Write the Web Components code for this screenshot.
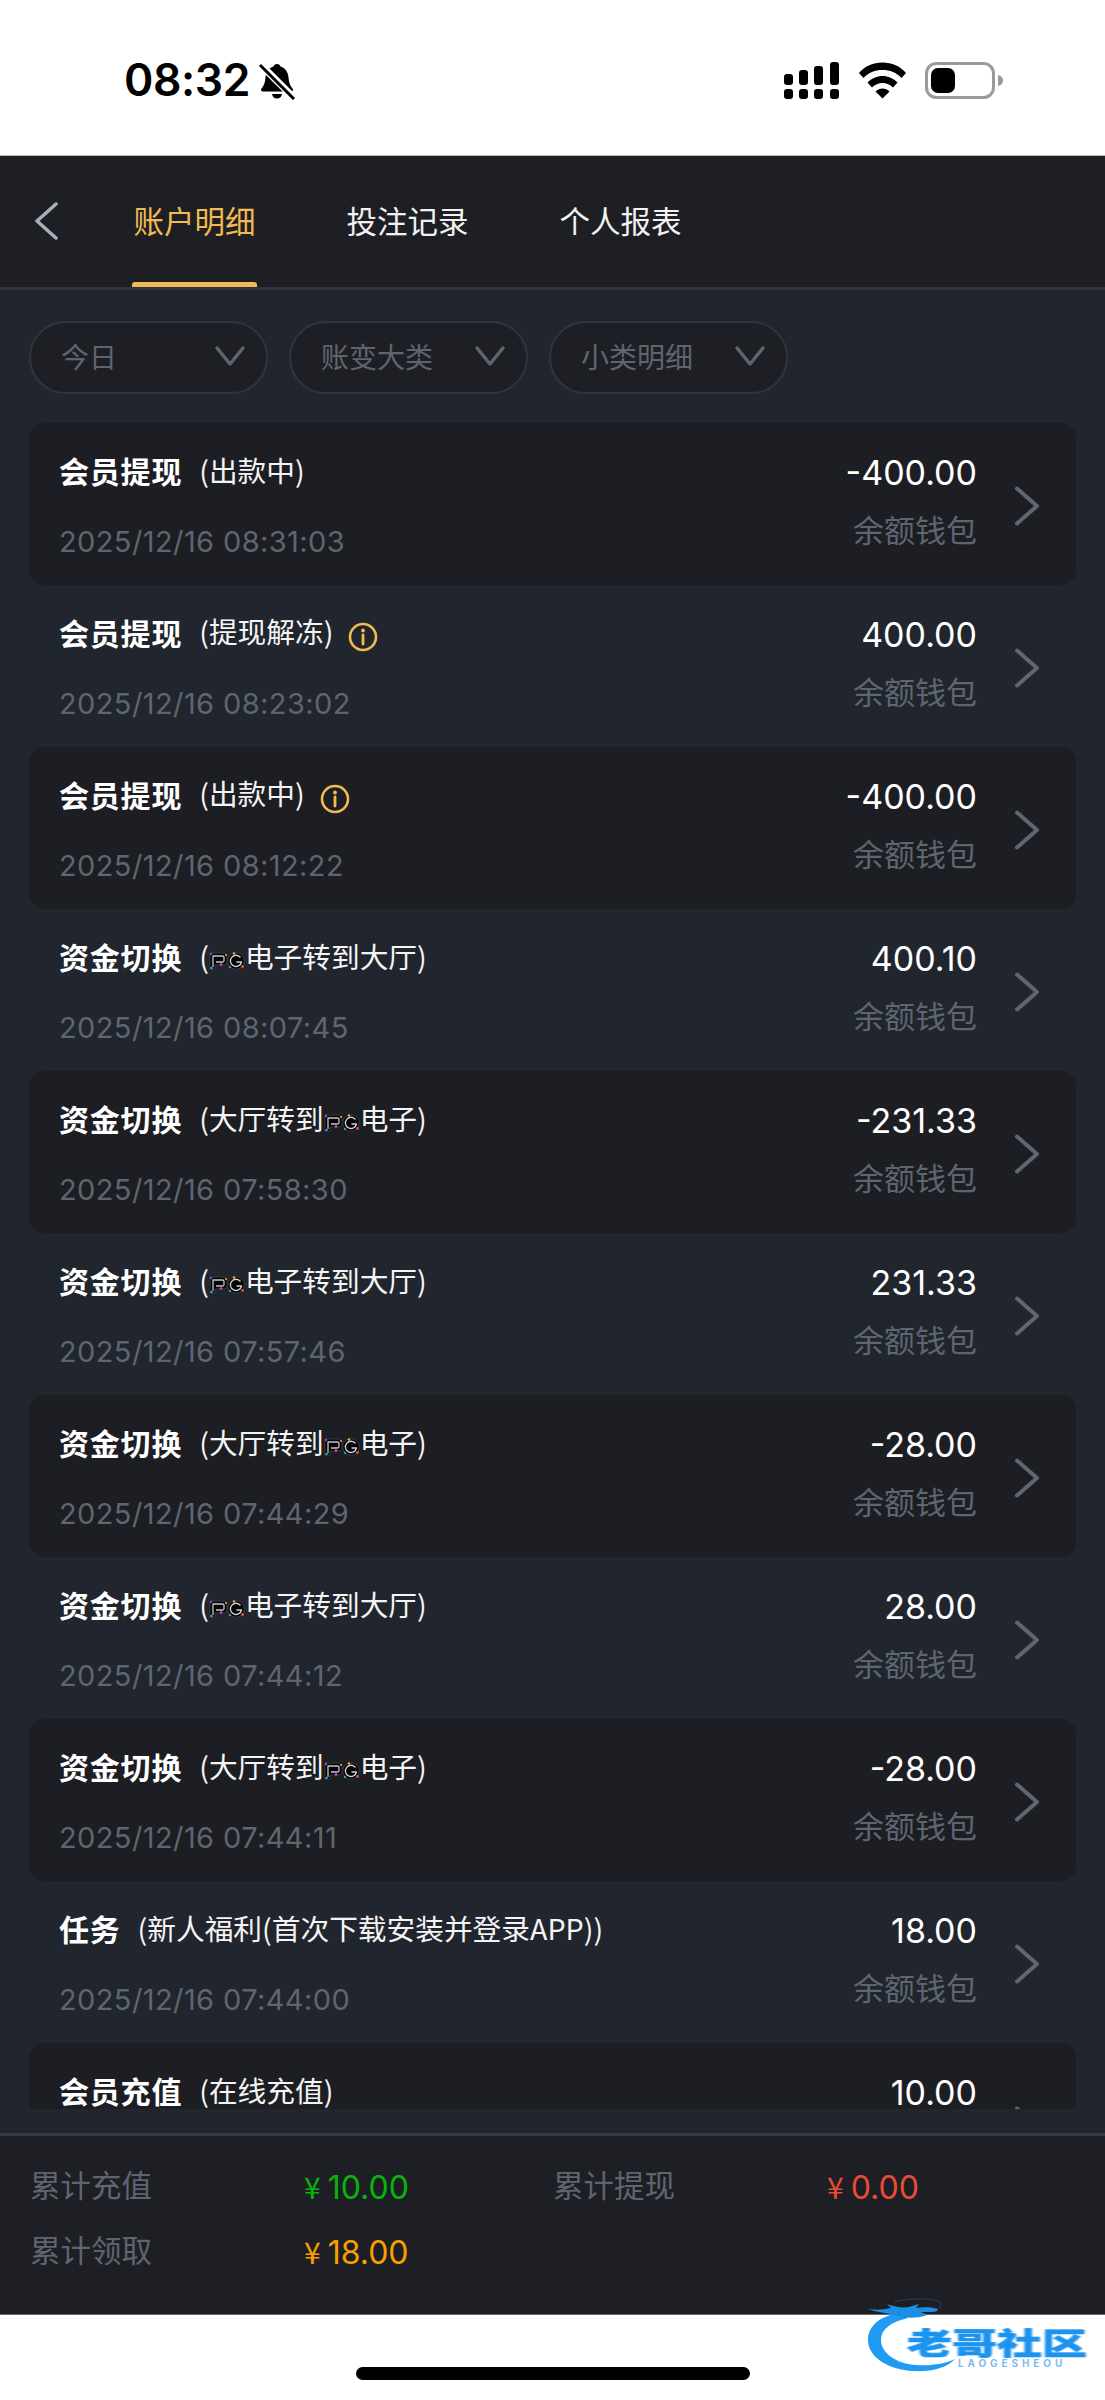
<!DOCTYPE html>
<html lang="zh"><head><meta charset="utf-8"><style>
html,body{margin:0;padding:0;background:#fff}
body{width:1105px;height:2400px;overflow:hidden;position:relative;font-family:Inter,"Noto Sans CJK SC",sans-serif}
</style></head><body>
<app-screen></app-screen>
<script>
const CJK='"Noto Sans CJK SC",Inter,sans-serif';
class StatusBar extends HTMLElement{constructor(){super();this.attachShadow({mode:'open'}).innerHTML=`<style>
:host{display:flex;height:156px;background:#fff;align-items:flex-start;box-sizing:border-box;padding:62px 0 0 124px;border-bottom:1px solid #bbb;color:#000}
.t{font:600 44.500px/36px Inter,sans-serif;letter-spacing:-.4px;width:134px;height:36px}
svg{display:block}
.r{margin-left:488px;display:flex;align-items:flex-start;gap:18px}
</style><span class="t">08:32</span>
<svg width="38" height="38" viewBox="0 0 38 38"><path d="M19 2c2 0 3 1 3.500 2.500 5 1.500 7.500 5.500 8 11 .4 5 1.500 8 4 11 1 1.500.5 3-1.500 3H5c-2 0-2.500-1.500-1.500-3 2.500-3 3.600-6 4-11 .5-5.500 3-9.500 8-11C16 3 17 2 19 2z"/><path d="M14 32h10c-.5 3-2.500 4.500-5 4.500S14.500 35 14 32z"/><path d="M3 3l33 33" stroke="#fff" stroke-width="7"/><path d="M2 3l34 34" stroke="#000" stroke-width="3"/></svg>
<div class="r">
<svg width="56" height="38" viewBox="0 0 56 38"><g><rect x="0" y="12" width="9" height="11" rx="3"/><rect x="15" y="8" width="9" height="15" rx="3"/><rect x="30" y="4" width="9" height="19" rx="3"/><rect x="46" y="0" width="9" height="23" rx="3"/><rect x="0" y="27" width="9" height="10" rx="3"/><rect x="15" y="27" width="9" height="10" rx="3"/><rect x="30" y="27" width="9" height="10" rx="3"/><rect x="46" y="27" width="9" height="10" rx="3"/></g></svg>
<svg width="49" height="37" viewBox="0 0 49 37"><path d="M1 11C7 4 15 .5 24.500.5S42 4 48 11l-4.500 5C38.500 10.500 32 8 24.500 8S10.500 10.500 5.500 16z"/><path d="M9.500 20.500C13.500 16.500 19 14 24.500 14s11 2.500 15 6.500l-4.500 5c-3-3-6.500-4.500-10.500-4.500S17 22.500 14 25.500z"/><path d="M17.500 29.500c2-2 4.500-3 7-3s5 1 7 3l-7 7z"/></svg>
<svg width="79" height="37" viewBox="0 0 79 37"><rect x="1.500" y="1.500" width="67" height="34" rx="10" fill="#fff" stroke="#9a9a9a" stroke-width="3"/><rect x="6" y="6" width="24" height="25" rx="7"/><path d="M73 13c3 .5 5 2.500 5 5.500s-2 5-5 5.500z" fill="#9a9a9a"/></svg>
</div>`}}
class NavTabs extends HTMLElement{constructor(){super();this.attachShadow({mode:'open'}).innerHTML=`<style>
:host{display:flex;height:134px;background:#1e1f24;border-bottom:3px solid #2d323c;box-sizing:border-box;align-items:stretch;font:400 30.500px/1 ${CJK};color:#f2f2f2}
.b{width:132px;flex:none;display:flex;align-items:center;padding:0 0 2px 33px;box-sizing:border-box}
.i{position:relative;display:flex;align-items:center;padding-bottom:2px;width:125px;white-space:nowrap;justify-content:center}
.i+.i{margin-left:88px}
.on{color:#efbb52}
.on::after{content:"";position:absolute;left:0;right:0;bottom:0;height:5px;background:#efbb52;border-radius:3px 3px 0 0}
</style><div class="b"><svg width="26" height="38" viewBox="0 0 26 38"><path d="M23 2L4 19l19 17" fill="none" stroke="#a7b0ba" stroke-width="3.500" stroke-linecap="round" stroke-linejoin="round"/></svg></div>
<div class="i on">账户明细</div><div class="i">投注记录</div><div class="i">个人报表</div>`}}
class FilterPill extends HTMLElement{constructor(){super();this.attachShadow({mode:'open'}).innerHTML=`<style>
:host{display:flex;align-items:center;justify-content:space-between;box-sizing:border-box;width:239px;height:73px;padding:0 21px 3px 30px;border:2px solid #2f3540;border-radius:37px;background:#1e1f24;color:#5e6570;font:400 28px/1 ${CJK}}
</style><slot></slot><svg width="30" height="21" viewBox="0 0 30 21"><path d="M2 2l13 16L28 2" fill="none" stroke="#5e6570" stroke-width="3.500" stroke-linecap="round" stroke-linejoin="round"/></svg>`}}
class FilterBar extends HTMLElement{constructor(){super();this.attachShadow({mode:'open'}).innerHTML=`<style>
:host{display:flex;gap:21px;padding:31px 29px 29px}</style><slot></slot>`}}
class PgLogo extends HTMLElement{constructor(){super();this.attachShadow({mode:'open'}).innerHTML=`<style>
:host{display:inline-block;width:36px;height:18px;vertical-align:-2px}svg{display:block}
</style><svg width="36" height="18" viewBox="0 0 36 18" fill="none" stroke-linejoin="round">
<path d="M1 17V1h13c2.500 0 4 1.500 4 4v4c0 2.500-1.500 4-4 4H6v4z" fill="#050505" stroke="#3a3b40" stroke-width="1"/>
<path d="M4 15V4h9.500c1 0 1.500.5 1.500 1.500v3c0 1-.5 1.500-1.500 1.500H7" stroke="#c4c5ca" stroke-width="1.300"/>
<circle cx="27" cy="9" r="8.300" fill="#050505" stroke="#3a3b40" stroke-width="1"/>
<path d="M31.500 5.500a5.600 5.600 0 1 0 1 4.500H27.500" stroke="#d0d1d5" stroke-width="1.300"/>
<circle cx="2" cy="2" r="1.300" fill="#7b3fe8"/><circle cx="2.500" cy="16" r="1.200" fill="#29b6e8"/><circle cx="12" cy="12.500" r="1.300" fill="#e040e0"/><circle cx="17" cy="3" r="1.100" fill="#f2a030"/>
<circle cx="25" cy="1.500" r="1.300" fill="#f2a030"/><circle cx="33.500" cy="14.500" r="1.400" fill="#f05030"/><circle cx="21" cy="15" r="1.100" fill="#29b6e8"/></svg>`}}
class InfoIcon extends HTMLElement{constructor(){super();this.attachShadow({mode:'open'}).innerHTML=`<style>
:host{display:inline-block;width:30px;height:30px;margin-left:15px;vertical-align:-9px}svg{display:block}
</style><svg width="30" height="30" viewBox="0 0 30 30"><circle cx="15" cy="15" r="13" fill="none" stroke="#efbb52" stroke-width="2.600"/><circle cx="15" cy="8.500" r="1.900" fill="#efbb52"/><path d="M15 13v9" stroke="#efbb52" stroke-width="2.800" stroke-linecap="round"/></svg>`}}
class LedgerRow extends HTMLElement{constructor(){super();const s=this.attachShadow({mode:'open'});
const d=this.getAttribute('d');
s.innerHTML=`<style>
:host{display:flex;height:162px;box-sizing:border-box;padding:29px 35px 0 30px;border-radius:15px;color:#fff;flex:none}
:host([dark]){background:#1d1e23}
.l{flex:1;min-width:0}
.tt{display:flex;align-items:center;height:36px;white-space:nowrap}
b{font:700 30px/36px ${CJK};letter-spacing:.8px}
.s{font:400 28.700px/36px ${CJK};margin-left:17px;color:#f4f4f4;white-space:nowrap}
.d{font:400 29px/40px Inter,sans-serif;color:#5e6570;margin-top:34px;white-space:nowrap;letter-spacing:.4px}
.r{width:200px;text-align:right;margin-right:36px}
.a{font:400 34px/32px Inter,sans-serif;margin-top:5px;color:#fff}
.w{font:400 31px/40px ${CJK};color:#5e6570;margin-top:20px}
svg{display:block;margin-top:33px;flex:none}
</style><div class="l"><div class="tt"><b></b><span class="s"><slot></slot></span></div>${d?'<div class="d"></div>':''}</div>
<div class="r"><div class="a"></div>${d?'<div class="w">余额钱包</div>':''}</div>
<svg width="28" height="42" viewBox="0 0 28 42"><path d="M4 3.500l20 17.500L4 38.500" fill="none" stroke="#5f6671" stroke-width="4" stroke-linecap="round" stroke-linejoin="round"/></svg>`;
s.querySelector('b').textContent=this.getAttribute('t');
if(d)s.querySelector('.d').textContent=d;
s.querySelector('.a').textContent=this.getAttribute('a');}}
class LedgerList extends HTMLElement{constructor(){super();this.attachShadow({mode:'open'}).innerHTML=`<style>
:host{display:flex;flex-direction:column;height:1686px;margin:0 29px 24px 29px;overflow:hidden}</style><slot></slot>`}}
class TotalCell extends HTMLElement{constructor(){super();const c=this.getAttribute('c');const s=this.attachShadow({mode:'open'});s.innerHTML=`<style>
:host{display:flex;align-items:center;height:65px;width:523px;flex:none}
.k{width:274px;flex:none;font:400 30.500px/1 ${CJK};color:#5e6570;padding-bottom:6px}
.v{font:400 32px/1 Inter,sans-serif;color:${c};white-space:nowrap}
.y{font:400 30px/1 ${CJK};margin-right:7px}
</style><span class="k"></span><span class="v"><span class="y">¥</span><span class="n"></span></span>`;
s.querySelector('.k').textContent=this.getAttribute('k');s.querySelector('.n').textContent=this.getAttribute('v');}}
class TotalsBar extends HTMLElement{constructor(){super();this.attachShadow({mode:'open'}).innerHTML=`<style>
:host{display:flex;flex-wrap:wrap;align-content:flex-start;height:182px;box-sizing:border-box;background:#1e1f24;border-top:3px solid #333843;border-bottom:1px solid #666a70;padding:19px 0 0 30px}
</style><slot></slot>`}}
class HomeBar extends HTMLElement{constructor(){super();this.attachShadow({mode:'open'}).innerHTML=`<style>
:host{display:flex;justify-content:center;background:#fff;height:85px;padding-top:52px;box-sizing:border-box}
i{display:block;width:394px;height:13px;background:#000;border-radius:7px}</style><i></i>`}}
class WatermarkLogo extends HTMLElement{constructor(){super();this.attachShadow({mode:'open'}).innerHTML=`<style>
:host{position:absolute;left:860px;top:2296px;width:240px;height:80px;display:block}
svg{position:absolute;left:0;top:0;filter:blur(.5px)}
.c{position:absolute;left:47px;top:30px;font:900 30px/30px ${CJK};white-space:nowrap;transform-origin:0 0;transform:scaleX(1.500);color:#1c93ee;filter:blur(.6px);-webkit-text-stroke:.6px #1c93ee}
.e{position:absolute;left:98px;top:62px;font:700 10px/10px Inter,sans-serif;letter-spacing:3.900px;color:#7cbdf0;white-space:nowrap}
</style><svg width="240" height="82" viewBox="0 0 240 82" fill="none">
<path d="M44 17C22 18 8 29 8 44c0 18 22 30 45 31 18 1 34-3 42-12-10 5-24 7-38 6C36 68 21 57 21 44c0-11 10-18 27-22z" fill="#1f9bf3"/>
<path d="M7 13c9 1 15 1 24-1l-4-4c8 3 15 4 22 3l10-3-3 4c7-1 16-1 22 1 0 3-5 3-9 3l-8 0 6 3c-10 4-22 3-30 1-10-3-20-4-30-7z" fill="#1b8fe4"/>
<path d="M34 6c10-3 36-5 46 0 2 2 1 4-1 6" stroke="#22384c" stroke-width="1.300"/></svg>
<span class="c">老哥社区</span><span class="e">LAOGESHEOU</span>`}}
class AppScreen extends HTMLElement{constructor(){super();
const rows=[
['会员提现','(出款中)','2025/12/16 08:31:03','-400.00',0],
['会员提现','(提现解冻)<info-icon></info-icon>','2025/12/16 08:23:02','400.00',1],
['会员提现','(出款中)<info-icon></info-icon>','2025/12/16 08:12:22','-400.00',0],
['资金切换','(<pg-logo></pg-logo>电子转到大厅)','2025/12/16 08:07:45','400.10',1],
['资金切换','(大厅转到<pg-logo></pg-logo>电子)','2025/12/16 07:58:30','-231.33',0],
['资金切换','(<pg-logo></pg-logo>电子转到大厅)','2025/12/16 07:57:46','231.33',1],
['资金切换','(大厅转到<pg-logo></pg-logo>电子)','2025/12/16 07:44:29','-28.00',0],
['资金切换','(<pg-logo></pg-logo>电子转到大厅)','2025/12/16 07:44:12','28.00',1],
['资金切换','(大厅转到<pg-logo></pg-logo>电子)','2025/12/16 07:44:11','-28.00',0],
['任务','(新人福利(首次下载安装并登录APP))','2025/12/16 07:44:00','18.00',1],
['会员充值','(在线充值)','','10.00',0]];
this.attachShadow({mode:'open'}).innerHTML=`<style>
:host{display:flex;flex-direction:column;width:1105px;height:2400px;background:#21252d;position:relative}
</style><status-bar></status-bar><nav-tabs></nav-tabs>
<filter-bar><filter-pill>今日</filter-pill><filter-pill>账变大类</filter-pill><filter-pill>小类明细</filter-pill></filter-bar>
<ledger-list>${rows.map(r=>`<ledger-row t="${r[0]}" d="${r[2]}" a="${r[3]}"${r[4]?'':' dark'}>${r[1]}</ledger-row>`).join('')}</ledger-list>
<totals-bar><total-cell k="累计充值" v="10.00" c="#0ab30c"></total-cell><total-cell k="累计提现" v="0.00" c="#ea4b35"></total-cell><total-cell k="累计领取" v="18.00" c="#f7a000"></total-cell></totals-bar>
<home-bar></home-bar><watermark-logo></watermark-logo>`}}
const defs={'status-bar':StatusBar,'nav-tabs':NavTabs,'filter-pill':FilterPill,'filter-bar':FilterBar,'pg-logo':PgLogo,'info-icon':InfoIcon,'ledger-row':LedgerRow,'ledger-list':LedgerList,'total-cell':TotalCell,'totals-bar':TotalsBar,'home-bar':HomeBar,'watermark-logo':WatermarkLogo,'app-screen':AppScreen};
for(const k in defs)customElements.define(k,defs[k]);
</script></body></html>
